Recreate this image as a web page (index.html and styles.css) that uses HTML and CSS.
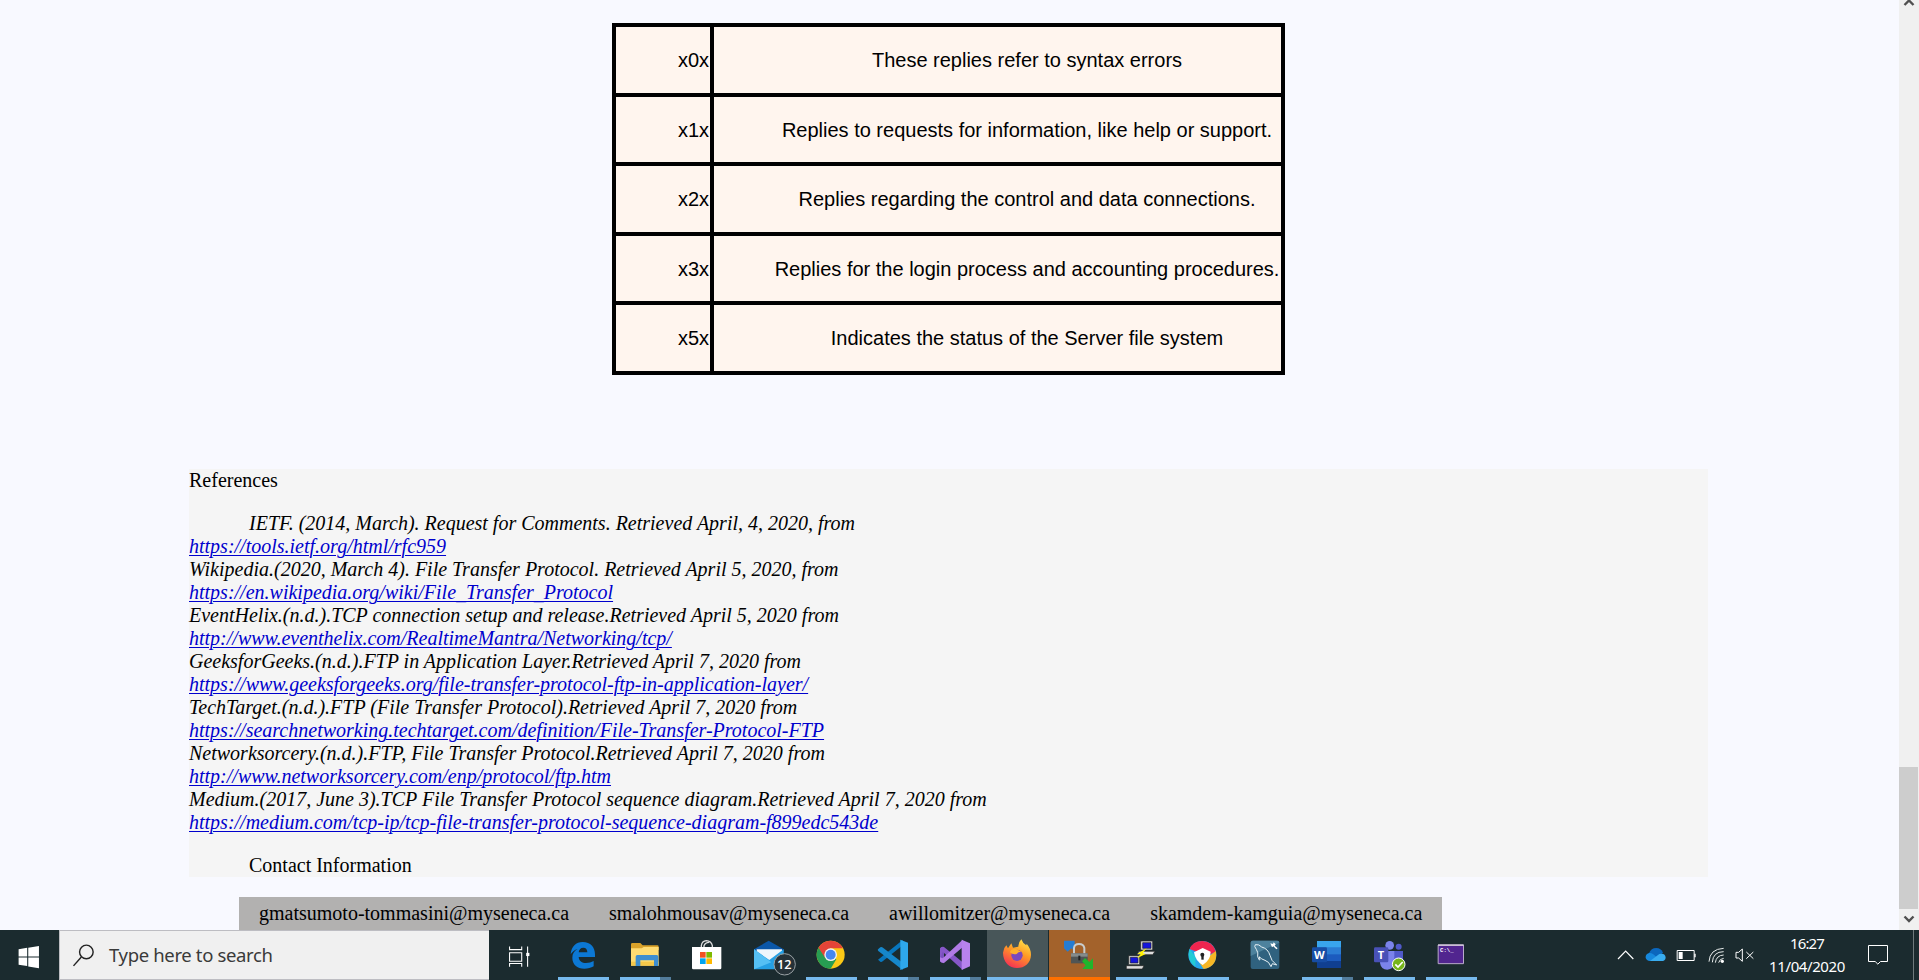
FILE: index.html
```html
<!DOCTYPE html>
<html lang="en">
<head>
<meta charset="utf-8">
<title>File Transfer Protocol</title>
<link rel="stylesheet" href="styles.css">
</head>
<body>
<div class="screen">
  <div class="browser">
    <main class="page">
      <table class="codes">
        <tr class="tall"><td class="code">x0x</td><td class="desc">These replies refer to syntax errors</td></tr>
        <tr><td class="code">x1x</td><td class="desc">Replies to requests for information, like help or support.</td></tr>
        <tr class="tall"><td class="code">x2x</td><td class="desc">Replies regarding the control and data connections.</td></tr>
        <tr><td class="code">x3x</td><td class="desc">Replies for the login process and accounting procedures.</td></tr>
        <tr class="tall"><td class="code">x5x</td><td class="desc">Indicates the status of the Server file system</td></tr>
      </table>
      <section class="references">
        <div>References</div>
        <p class="cites">IETF. (2014, March). Request for Comments. Retrieved April, 4, 2020, from<br>
        <a href="#">https://tools.ietf.org/html/rfc959</a><br>
        Wikipedia.(2020, March 4). File Transfer Protocol. Retrieved April 5, 2020, from<br>
        <a href="#">https://en.wikipedia.org/wiki/File_Transfer_Protocol</a><br>
        EventHelix.(n.d.).TCP connection setup and release.Retrieved April 5, 2020 from<br>
        <a href="#">http://www.eventhelix.com/RealtimeMantra/Networking/tcp/</a><br>
        GeeksforGeeks.(n.d.).FTP in Application Layer.Retrieved April 7, 2020 from<br>
        <a href="#">https://www.geeksforgeeks.org/file-transfer-protocol-ftp-in-application-layer/</a><br>
        TechTarget.(n.d.).FTP (File Transfer Protocol).Retrieved April 7, 2020 from<br>
        <a href="#">https://searchnetworking.techtarget.com/definition/File-Transfer-Protocol-FTP</a><br>
        Networksorcery.(n.d.).FTP, File Transfer Protocol.Retrieved April 7, 2020 from<br>
        <a href="#">http://www.networksorcery.com/enp/protocol/ftp.htm</a><br>
        Medium.(2017, June 3).TCP File Transfer Protocol sequence diagram.Retrieved April 7, 2020 from<br>
        <a href="#">https://medium.com/tcp-ip/tcp-file-transfer-protocol-sequence-diagram-f899edc543de</a></p>
        <div class="contact">Contact Information</div>
      </section>
      <div class="emails"><span>gmatsumoto-tommasini@myseneca.ca</span><span>smalohmousav@myseneca.ca</span><span>awillomitzer@myseneca.ca</span><span>skamdem-kamguia@myseneca.ca</span></div>
    </main>
    <div class="scrollbar">
      <svg class="up" viewBox="0 0 20 10"><path d="M5.500 5 10 .5 14.500 5" fill="none" stroke="#505050" stroke-width="2.400"/></svg>
      <div class="thumb"></div>
      <svg class="down" viewBox="0 0 20 21"><path d="M5.500 7.500 10 12l4.500-4.500" fill="none" stroke="#505050" stroke-width="2.400"/></svg>
    </div>
  </div>
  <div class="taskbar">
    <div class="start"><svg viewBox="0 14 165 140"><path fill="#fff" d="M52 68l24-4v24H52zM79 63.500l30-4.500v29H79zM52 91h24v24l-24-3.500zM79 91h30v30l-30-4.500z"/></svg></div>
    <div class="search">
      <svg viewBox="200 55 70 70"><g fill="none" stroke="#222" stroke-width="4"><circle cx="243" cy="80" r="19"/><path d="M229 94 207 119"/></g></svg>
      <span>Type here to search</span>
    </div>
    <div class="taskview"><svg viewBox="1369 14 179 140"><g fill="none" stroke="#fff" stroke-width="3"><path d="M1426.500 60v9h34v-9M1426.500 117v-9h34v9M1426.500 77.500h34v24h-34zM1477 60v57"/></g><path fill="#fff" d="M1473 78h9v9h-9z"/></svg></div>
    <div class="slot run"><svg viewBox="39 15 186 150"><path fill="#0c78d4" d="M92 88c2-24 16-37 36-37 24 0 37 16 37 37v8h-49c1 12 10 18 22 18 9 0 16-2 23-6v16c-8 5-17 7-28 7-22 0-36-13-36-33 0-12 6-21 16-26-9 2-16 8-21 16zm24-6h26c0-9-4-14-12-14s-13 5-14 14z"/></svg></div>
    <div class="slot run many"><svg viewBox="225 15 186 150"><path fill="#d9a22a" d="M273 58q0-4 4-4h24l7 7h44q4 0 4 4v10h-83z"/><path fill="#ffdc73" d="M273 70h32l6-4h45v56h-83z"/><path fill="#f6c84a" d="M273 110h83v12h-83z"/><path fill="#3e8ed0" d="M287 123V95q0-5 5-5h58q5 0 5 5v28h-13v-17h-41v17z"/></svg></div>
    <div class="slot"><svg viewBox="411 15 186 150"><path fill="none" stroke="#ddd" stroke-width="4" d="M484 68v-6q2-14 15-15 15 1 18 15v6M492 66v-4q4-10 15-10"/><path fill="#fff" d="M456 66h88v63q0 4-4 4h-80q-4 0-4-4z"/><path fill="#f25022" d="M480 81h17v17h-17z"/><path fill="#7fba00" d="M499 81h17v17h-17z"/><path fill="#00a4ef" d="M480 100h17v17h-17z"/><path fill="#ffb900" d="M499 100h17v17h-17z"/></svg></div>
    <div class="slot"><svg viewBox="597 15 186 150"><path fill="#0b57a8" d="M642 73l44-26 45 26v30h-89z"/><path fill="#eef6fc" d="M650 73h76v28l-38 14-38-20z"/><path fill="#25a0e4" d="M642 73l46 32 43-32v60h-89z"/><path fill="#55c0f4" d="M642 73l52 39-52 21z"/><circle cx="734" cy="118" r="32" fill="#263238" stroke="#9aa2a5" stroke-width="3"/><text x="733" y="131" text-anchor="middle" class="badge">12</text></svg></div>
    <div class="slot run"><svg viewBox="783 15 186 150"><circle cx="872" cy="89" r="42" fill="#fbc916"/><path fill="#279d52" d="M872 89 835.600 68A42 42 0 0 0 872 131L889 103z"/><path fill="#e34438" d="M835.600 68q12-21 36.400-21 26 0 37 23h-37l-17 28z"/><circle cx="872" cy="89" r="19" fill="#f2f2f2"/><circle cx="872" cy="89" r="15" fill="#4587f0"/></svg></div>
    <div class="slot run many"><svg viewBox="9 15 186 150"><path fill="#0876bd" d="M54 104l7 6q3 2 7-1l60-48V45z"/><path fill="#1687cb" d="M54 73l7-6q4-2 8 1l60 46v20l-8-4-66-52q-3-3-1-5z"/><path fill="#2ea8ec" d="M121 44l23 9v73l-23 9z"/></svg></div>
    <div class="slot run many"><svg viewBox="195 15 186 150"><path fill="#7850bd" d="M240 70l12-5v50l-12-5z"/><path fill="#8657c8" d="M240 71q2-7 12-5l56 46v23l-60-55-8 24z"/><path fill="#b07be6" d="M240 108q3 6 12 6l56-47V44l-60 56-8-3z"/><path fill="#b782ed" d="M305 44l25 11v69l-25 11z"/></svg></div>
    <div class="slot active"><svg viewBox="381 15 186 150"><defs><linearGradient id="fox" x1=".8" y1="0" x2=".3" y2="1"><stop offset="0" stop-color="#ffe54b"/><stop offset=".45" stop-color="#ff9a25"/><stop offset="1" stop-color="#f52f55"/></linearGradient></defs><path fill="url(#fox)" d="M429 83q1-14 10-22l5 9 10-15 5 13 16-3q-1-12 9-22 4 12 15 18l1-5q13 15 13 33c0 24-19 40-42 40s-42-18-42-46z"/><circle cx="471" cy="91" r="17" fill="#7b49bd"/><path fill="#ffb02b" d="M450 82q3-13 20-9l14 7q-10 0-14 7-12 3-20-5z"/></svg></div>
    <div class="slot alert"><svg viewBox="567 15 186 150"><path fill="#257cd2" d="M612 47h32v31l-10-8-11 10-11-10z"/><path fill="none" stroke="#c8cccc" stroke-width="6" d="M642 87V69q1-12 15-12t16 12v18"/><path fill="#505555" d="M633 85h50v30h-50z"/><path fill="#858b8b" d="M633 85h50v10h-50z"/><path fill="#222" d="M655 92h6v14h-6z"/><path fill="#20b52c" d="M666 109l9-10 13 12 11-11v32h-32l10-11z"/></svg></div>
    <div class="slot run"><svg viewBox="753 15 186 150"><g stroke="#222" stroke-width="2"><path fill="#ddd" d="M842 48h36v27h-36zM837 79h48l-7 10h-47zM806 92h33v27h-33zM799 122h53l-5 10h-48z"/><path fill="#1515dc" d="M848 53h25v17h-25zM811 97h23v17h-23z"/></g><path fill="#fff200" d="M860 70l-28 16 10 1-11 13 26-13-9-2z"/></svg></div>
    <div class="slot run"><svg viewBox="-21 15 186 150"><circle cx="67" cy="90" r="42" fill="#26a5eb"/><path fill="#ef254f" d="M29 72Q39 48 67 48q30 0 41 32L80 92z"/><path fill="#f7b725" d="M108 78q6 47-37 54l-12-18z"/><path fill="#24cbd5" d="M29 72l18 25-1 28Q18 103 29 72z"/><path fill="#fff" d="M42 82l26-13 24 11q0 25-24 40-22-12-26-38z"/><circle cx="67" cy="89" r="6" fill="#222"/><path fill="#222" d="M64 90h7v14h-7z"/></svg></div>
    <div class="slot"><svg viewBox="165 15 186 150"><rect x="212" y="47" width="86" height="85" rx="6" fill="#30627f"/><path fill="#4d829d" d="M218 47h74q6 0 6 6l-86 40V53q0-6 6-6z"/><path fill="none" stroke="#e9f3f7" stroke-width="3" d="M238 105l-5-10q3-12-4-22-8-9-3-14 11-2 19 7 19 5 25 25l6 15 14 14-13-4-4 9q-6-16-18-19-13-4-17-11l2 9z"/><path fill="#fff" d="M271 55l8 2 2-5 6 6-3 4 9 8-4 3-9-9-4 3z"/></svg></div>
    <div class="slot run many"><svg viewBox="351 15 186 150"><rect x="411" y="48" width="72" height="81" rx="4" fill="#1c5bbe"/><path fill="#39a5ed" d="M411 48h72v20h-72z"/><path fill="#2b7cd3" d="M411 68h72v20h-72z"/><path fill="#103f91" d="M411 108h72v21h-72z"/><rect x="396" y="67" width="45" height="45" rx="4" fill="#174da5"/><text x="418" y="101" text-anchor="middle" class="letter">W</text></svg></div>
    <div class="slot run"><svg viewBox="537 15 186 150"><circle cx="629" cy="61" r="13" fill="#7b83eb"/><circle cx="656" cy="65" r="9" fill="#5059c9"/><path fill="#5059c9" d="M635 78h34v33q-8 17-34 8z"/><path fill="#7b83eb" d="M602 78h41v34q-2 22-21 22t-22-20z"/><rect x="582" y="67" width="43" height="45" rx="4" fill="#4951b7"/><text x="603" y="101" text-anchor="middle" class="letter">T</text><circle cx="656" cy="118" r="19" fill="#76b51b" stroke="#fff" stroke-width="3"/><path fill="none" stroke="#fff" stroke-width="5" d="M646 118l8 8 14-15"/></svg></div>
    <div class="slot run"><svg viewBox="723 15 186 150"><path fill="#51258f" stroke="#b9a9cb" stroke-width="3" d="M774.500 60h76v56h-76z"/><path fill="#c9bdd4" d="M774 58h77v5h-77z"/><text x="780" y="82" class="prompt">C:\_</text></svg></div>
    <div class="tray">
      <svg class="status" viewBox="70 15 450 150"><path fill="none" stroke="#fff" stroke-width="3.500" d="M88 102l23-24 23 24"/><path fill="#0b67bd" d="M181 85q6-16 22-16 14 0 20 14l-20 17z"/><path fill="#1689dd" d="M181 84q-11 3-10 14 2 9 13 10h34l-24-20q-7-5-13-4z"/><path fill="#39adf0" d="M184 108l28-21q18-4 19 11-1 10-13 10z"/><path fill="none" stroke="#fff" stroke-width="3" d="M265.500 76.500h51v30h-51z"/><path fill="#fff" d="M270 81h12v21h-12zM317 86h4v11h-4z"/><g fill="none" stroke="#e9eded" stroke-width="3"><path d="M361 110q2-38 44-40M371 112q2-32 34-32M380 113q3-22 25-23M390 113q3-12 15-13"/></g><circle cx="401" cy="109" r="5" fill="#fff"/><path fill="none" stroke="#fff" stroke-width="3" d="M442 82h8l11-10v37l-11-10h-8zM473 81l21 20M494 81l-21 20"/></svg>
      <div class="clock"><span class="time">16:27</span><span>11/04/2020</span></div>
      <svg class="notes" viewBox="810 15 150 150"><path fill="none" stroke="#fff" stroke-width="3" d="M838.500 61.500h57v48h-21l-8 8-8-8h-20z"/></svg>
      <div class="peek"></div>
    </div>
  </div>
</div>
</body>
</html>
```
FILE: styles.css
```css
body { margin: 0; overflow: hidden; font-family: "Liberation Serif", serif; font-size: 20px; line-height: 23px; color: #000; }
svg { display: block; }
.screen { display: flex; flex-direction: column; width: 1919px; height: 980px; }
.browser { display: flex; height: 930px; overflow: hidden; background: #f8f9ff; }
.page { flex: 1; padding: 23px 0 0 189px; }
.codes { margin: 0 0 0 423px; width: 673px; border-collapse: separate; border-spacing: 0; border: solid #000; border-width: 4px 0 0 4px; table-layout: fixed; background: #fff5ee; font-family: "Liberation Sans", Arial, sans-serif; font-size: 20px; }
.codes td { box-sizing: border-box; height: 69px; padding: 1px 1px 0; border: solid #000; border-width: 0 4px 4px 0; }
.codes .tall td { height: 70px; }
.codes .code { width: 98px; text-align: right; }
.codes .desc { padding-left: 60px; text-align: center; white-space: nowrap; }
.references { width: 1519px; margin-top: 94px; background: #f5f5f5; }
.cites { margin: 20px 0; text-indent: 60px; font-style: italic; white-space: nowrap; }
.cites a { color: #0000cd; text-decoration: underline; text-underline-offset: 2px; text-decoration-thickness: 1px; }
.contact { padding-left: 60px; }
.emails { display: flex; width: 1203px; height: 33px; margin: 20px 0 0 50px; background: #b2b1b0; white-space: nowrap; }
.emails span { padding: 5px 20px; }
.scrollbar { display: flex; flex-direction: column; width: 20px; background: #f0f0f0; }
.up { width: 20px; height: 10px; }
.thumb { width: 19px; height: 142px; margin-top: 757px; background: #cdcdcd; }
.down { width: 20px; height: 21px; }
.taskbar { display: flex; height: 50px; background: #1b2b2f; font-family: "Noto Sans", sans-serif; }
.start, .start svg { width: 59px; height: 50px; }
.search { display: flex; align-items: center; box-sizing: border-box; width: 430px; height: 50px; padding-left: 11px; border: solid #bdbdc2; border-width: 1px 0 1px 1px; background: #f0f0f0; color: #3a3a3a; font-size: 18.500px; letter-spacing: -0.350px; }
.search svg { width: 25px; height: 25px; margin-right: 13px; }
.search span { margin-top: -1px; }
.taskview, .taskview svg { width: 64px; height: 50px; }
.slot { display: grid; justify-items: start; width: 62px; height: 50px; }
.slot svg { grid-area: 1 / 1; width: 62px; height: 50px; }
.slot::after { grid-area: 1 / 1; align-self: end; height: 3px; }
.run::after { content: ""; width: 51px; margin-left: 5px; background: #76b9ed; }
.many::after { background: linear-gradient(90deg, #76b9ed 40px, #527c9b 40px); }
.active { width: 61px; margin-right: 1px; background: #485659; }
.active::after { content: ""; width: 61px; background: #76b9ed; }
.alert { width: 61px; margin-right: 1px; background: #a3622b; }
.alert::after { content: ""; width: 61px; background: #ff7000; }
.badge { fill: #fff; font: 600 38px "Open Sans", sans-serif; }
.letter { fill: #fff; font: 700 33px "Open Sans", sans-serif; }
.prompt { fill: #fff; font: 700 17px "Liberation Mono", monospace; }
.tray { display: flex; flex: 1; justify-content: flex-end; color: #fff; }
.status { width: 150px; height: 50px; }
.clock { display: flex; flex-direction: column; align-items: center; box-sizing: border-box; width: 97px; padding: 2px 7px 0 0; font-size: 15px; line-height: 23px; letter-spacing: -0.400px; }
.time { letter-spacing: -0.900px; }
.notes { width: 50px; height: 50px; }
.peek { width: 5px; margin-left: 4px; border-left: 1px solid #6f7a7d; }
```
